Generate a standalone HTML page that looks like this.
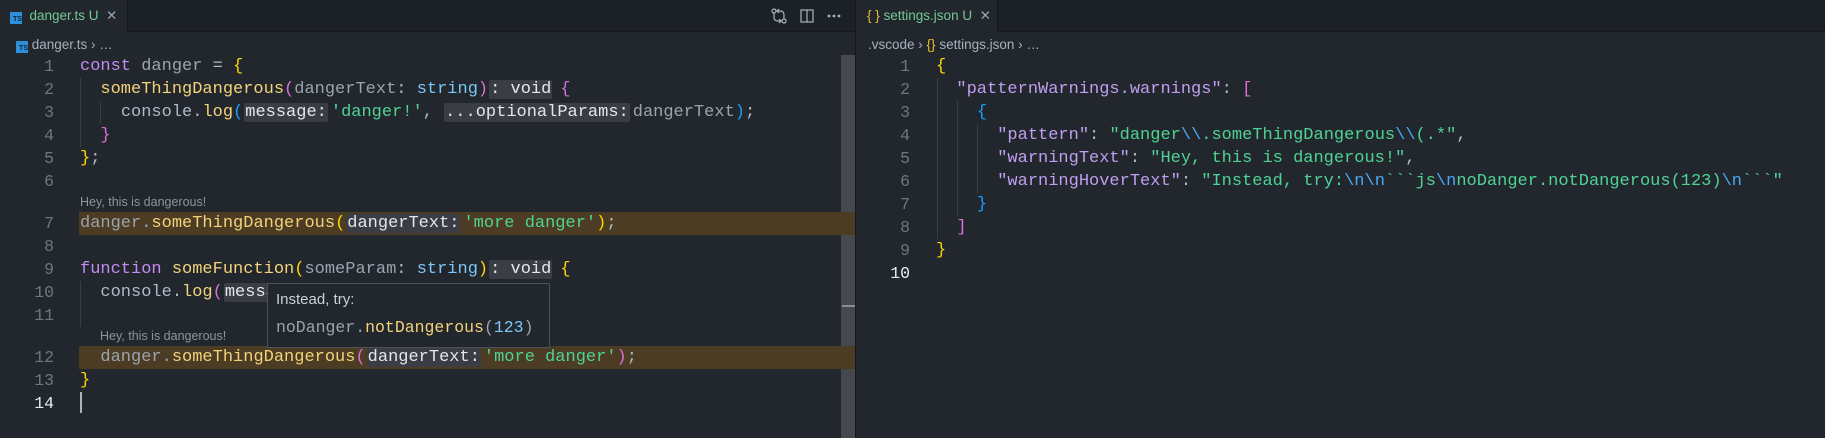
<!DOCTYPE html>
<html><head><meta charset="utf-8"><style>
*{margin:0;padding:0;box-sizing:border-box}
body{width:1825px;height:438px;background:#22272e;overflow:hidden;position:relative;font-family:"Liberation Mono",monospace;font-size:17px;color:#adbac7}
.abs{position:absolute}
.tabbar{left:0;top:0;width:1825px;height:32px;background:#1c2128;border-bottom:1px solid #15181c}
.tab{top:0;height:32px;background:#22272e;font-family:"Liberation Sans",sans-serif;font-size:13.5px;color:#73c991;line-height:32px;border-right:1px solid #15181c}
.crumb{font-family:"Liberation Sans",sans-serif;font-size:13.5px;color:#a8b1bb;top:36px;height:18px;line-height:18px}
.ln{width:54px;text-align:right;color:#6e7681;height:23px;line-height:23px;font-size:16.5px}
.cl{height:23px;line-height:23px;white-space:pre}
.hey{font-family:"Liberation Sans",sans-serif;font-size:12.5px;color:#8b949e;height:19px;line-height:19px}
.hl{background:#4b3c23}
.k{color:#c38cf0}.f{color:#f2d27a}.v{color:#9ba4ae}.t{color:#7cc7f5}.s{color:#4fd394}.p{color:#adbac7}
.y{color:#ffd700}.o{color:#da70d6}.b{color:#179fff}
.ih{background:#3a3e44;color:#e3e7ea;padding:0 1px;margin:0 3px 0 1px;border-radius:2px}
.vd{margin-right:8px}
.jk{color:#c09ef0}.js{color:#4fd394}.esc{color:#4ba8f5}
.guide{width:1px;background:#3a3f46}
.ts{display:inline-block;width:12px;height:12px;background:#2f8fd8;color:#0a2540;font-size:7px;font-weight:bold;line-height:16px;text-align:right;font-family:"Liberation Sans",sans-serif;vertical-align:-1px}
</style></head><body>
<div class="abs tabbar"></div>
<div class="abs tab" style="left:0;width:128px;padding-left:10px"><span class="ts">TS</span>&nbsp; danger.ts U &nbsp;<span style="color:#9aa3ad">✕</span></div>
<div class="abs tab" style="left:856px;width:142px;padding-left:11px"><span style="color:#e8c02c">{ }</span> settings.json U &nbsp;<span style="color:#9aa3ad">✕</span></div>
<svg class="abs" style="left:770px;top:7px" width="90" height="18" viewBox="0 0 90 18" fill="none" stroke="#aab3bd" stroke-width="1.2">
<circle cx="4" cy="4" r="2"/><circle cx="14" cy="14" r="2"/><path d="M4 6v4q0 4 4 4h4M14 12V8q0-4-4-4H7M9 2l-2 2 2 2M9 12l2 2-2 2"/>
<rect x="31" y="3" width="12" height="12"/><path d="M37 3v12"/>
<circle cx="59" cy="9" r=".8" fill="#aab3bd"/><circle cx="64" cy="9" r=".8" fill="#aab3bd"/><circle cx="69" cy="9" r=".8" fill="#aab3bd"/>
</svg>
<div class="abs" style="left:855px;top:0;width:1px;height:438px;background:#15181c"></div>
<div class="abs crumb" style="left:16px"><span class="ts">TS</span> danger.ts › …</div>
<div class="abs crumb" style="left:868px">.vscode › <span style="color:#e8c02c">{}</span> settings.json › …</div>
<div class="abs" style="left:841px;top:55px;width:14px;height:383px;background:#45484d"></div>
<div class="abs" style="left:842px;top:305px;width:13px;height:2px;background:#8a8d91"></div>
<div class="abs hl" style="left:79px;top:212px;width:776px;height:23px"></div>
<div class="abs hl" style="left:79px;top:346px;width:776px;height:23px"></div>
<div class="abs guide" style="left:80px;top:78px;height:69px"></div>
<div class="abs guide" style="left:100px;top:101px;height:23px"></div>
<div class="abs guide" style="left:80px;top:281px;height:46px"></div>
<div class="abs guide" style="left:937px;top:78px;height:161px"></div>
<div class="abs guide" style="left:957px;top:101px;height:115px"></div>
<div class="abs guide" style="left:977px;top:124px;height:69px"></div>
<div class="abs" style="left:0;top:55px">
<div class="ln">1</div><div class="ln">2</div><div class="ln">3</div><div class="ln">4</div><div class="ln">5</div><div class="ln">6</div><div style="height:19px"></div><div class="ln">7</div><div class="ln">8</div><div class="ln">9</div><div class="ln">10</div><div class="ln">11</div><div style="height:19px"></div><div class="ln">12</div><div class="ln">13</div><div class="ln" style="color:#e6edf3">14</div>
</div>
<div class="abs" style="left:80px;top:55px">
<div class="cl"><span class="k">const</span> <span class="v">danger</span> <span class="p">=</span> <span class="y">{</span></div>
<div class="cl">  <span class="f">someThingDangerous</span><span class="o">(</span><span class="v">dangerText</span><span class="p">:</span> <span class="t">string</span><span class="o">)</span><span class="ih vd">: void</span><span class="o">{</span></div>
<div class="cl">    <span class="p">console.</span><span class="f">log</span><span class="b">(</span><span class="ih">message:</span><span class="s">'danger!'</span><span class="p">,</span> <span class="ih">...optionalParams:</span><span class="v">dangerText</span><span class="b">)</span><span class="p">;</span></div>
<div class="cl">  <span class="o">}</span></div>
<div class="cl"><span class="y">}</span><span class="p">;</span></div>
<div class="cl"> </div>
<div class="hey">Hey, this is dangerous!</div>
<div class="cl"><span class="v">danger.</span><span class="f">someThingDangerous</span><span class="y">(</span><span class="ih">dangerText:</span><span class="s">'more danger'</span><span class="y">)</span><span class="p">;</span></div>
<div class="cl"> </div>
<div class="cl"><span class="k">function</span> <span class="f">someFunction</span><span class="y">(</span><span class="v">someParam</span><span class="p">:</span> <span class="t">string</span><span class="y">)</span><span class="ih vd">: void</span><span class="y">{</span></div>
<div class="cl">  <span class="p">console.</span><span class="f">log</span><span class="o">(</span><span class="ih">message:</span></div>
<div class="cl"> </div>
<div class="hey" style="padding-left:20px">Hey, this is dangerous!</div>
<div class="cl">  <span class="v">danger.</span><span class="f">someThingDangerous</span><span class="o">(</span><span class="ih">dangerText:</span><span class="s">'more danger'</span><span class="o">)</span><span class="p">;</span></div>
<div class="cl"><span class="y">}</span></div>
<div class="cl"><span style="display:inline-block;width:2px;height:21px;background:#aab3bd;vertical-align:middle"></span></div>
</div>
<div class="abs" style="left:267px;top:283px;width:283px;height:65px;background:#22272e;border:1px solid #4c5259;padding:4px 8px">
<div style="font-family:'Liberation Sans',sans-serif;font-size:15px;color:#c9d1d9;height:28px;line-height:24px">Instead, try:</div>
<div style="font-size:16.5px;line-height:24px;white-space:pre"><span class="v">noDanger.</span><span class="f">notDangerous</span><span class="v">(</span><span class="t">123</span><span class="v">)</span></div>
</div>
<div class="abs" style="left:856px;top:55px">
<div class="ln">1</div><div class="ln">2</div><div class="ln">3</div><div class="ln">4</div><div class="ln">5</div><div class="ln">6</div><div class="ln">7</div><div class="ln">8</div><div class="ln">9</div><div class="ln" style="color:#e6edf3">10</div>
</div>
<div class="abs" style="left:936px;top:55px">
<div class="cl"><span class="y">{</span></div>
<div class="cl">  <span class="jk">"patternWarnings.warnings"</span><span class="p">:</span> <span class="o">[</span></div>
<div class="cl">    <span class="b">{</span></div>
<div class="cl">      <span class="jk">"pattern"</span><span class="p">:</span> <span class="js">"danger<span class="esc">\\</span>.someThingDangerous<span class="esc">\\</span>(.*"</span><span class="p">,</span></div>
<div class="cl">      <span class="jk">"warningText"</span><span class="p">:</span> <span class="js">"Hey, this is dangerous!"</span><span class="p">,</span></div>
<div class="cl">      <span class="jk">"warningHoverText"</span><span class="p">:</span> <span class="js">"Instead, try:<span class="esc">\n\n</span>&#96;&#96;&#96;js<span class="esc">\n</span>noDanger.notDangerous(123)<span class="esc">\n</span>&#96;&#96;&#96;"</span></div>
<div class="cl">    <span class="b">}</span></div>
<div class="cl">  <span class="o">]</span></div>
<div class="cl"><span class="y">}</span></div>
<div class="cl"> </div>
</div>
</body></html>
